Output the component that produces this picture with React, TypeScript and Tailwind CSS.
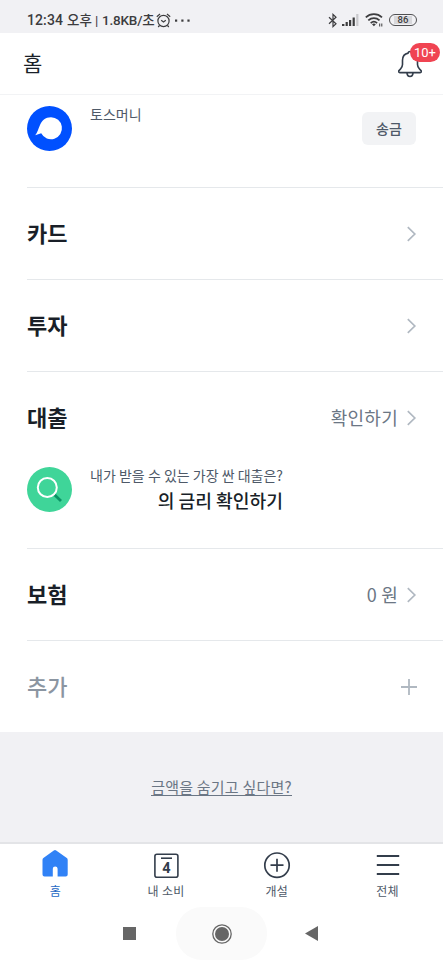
import React from 'react';

const Chevron: React.FC = () => (
  <svg className="w-[11px] h-4 ml-2" viewBox="0 0 11 16" fill="none" stroke="#b0b8c1" strokeWidth="1.7">
    <path d="M1.8 1.2 8.8 8l-7 6.8" />
  </svg>
);

interface RowProps {
  title: string;
  value?: string;
}

const SectionRow: React.FC<RowProps> = ({ title, value }) => (
  <div className="flex h-[91px] items-center justify-between pr-[26px]">
    <h2 className="pb-[4px] text-[22px] leading-8 font-bold text-[#191f28]">{title}</h2>
    <div className="flex items-center text-[18px] leading-7 text-[#6b7684]">
      <span className="pb-[2px] tracking-[0.25px]">{value}</span>
      <Chevron />
    </div>
  </div>
);

const StatusBar: React.FC = () => (
  <div className="flex h-[33px] items-center justify-between bg-[#f1f1f4] pt-[7px] pr-[26px] pl-[27px] text-[#3c3c3e]">
    <div className="flex items-center font-[Roboto,'Noto_Sans_CJK_KR',sans-serif] text-[13.5px] leading-5 font-medium whitespace-nowrap">
      <span className="w-[37px] text-[14px] tracking-[0.1px]">12:34</span>
      <span className="ml-[3px] w-[25px]">오후</span>
      <span className="ml-[3px] w-1 font-normal">|</span>
      <span className="ml-[3px] w-[51px] tracking-[-0.2px]">1.8KB/초</span>
      <svg className="ml-[3px] h-[15px] w-[15px]" viewBox="0 0 15 15" fill="none" stroke="currentColor" strokeWidth="1.2">
        <circle cx="7.5" cy="8" r="5.6" />
        <path d="M5.2 7.3 7.5 9l2.3-1.7M.8 3.7 4 1M14.2 3.7 11 1M3.5 12.5 2.2 14M11.5 12.5l1.3 1.5" />
      </svg>
      <svg className="ml-1 h-[3px] w-[15px]" viewBox="0 0 15 3" fill="currentColor">
        <rect x="0" y="0.5" width="2.2" height="2.2" />
        <rect x="6.3" y="0.5" width="2.2" height="2.2" />
        <rect x="12.4" y="0.5" width="2.2" height="2.2" />
      </svg>
    </div>
    <div className="flex items-center">
      <svg className="h-[15px] w-[10px]" viewBox="0 0 10 15" fill="none" stroke="currentColor" strokeWidth="1.2">
        <path d="M1 4.2 8 10.7 5 13.6V1.4L8 4.3 1 10.8" />
      </svg>
      <svg className="ml-1 h-3 w-[17px]" viewBox="0 0 17 12" fill="currentColor">
        <rect x="0" y="10" width="2.4" height="2" />
        <rect x="3.6" y="8" width="2.2" height="4" />
        <rect x="7" y="6" width="2.2" height="6" />
        <rect x="10.6" y="3.5" width="2.2" height="8.5" />
        <rect x="14.2" y="0" width="2.2" height="12" fill="#c9c9cc" />
      </svg>
      <svg className="ml-1.5 h-[14px] w-[18px]" viewBox="0 0 18 14" fill="none" stroke="currentColor" strokeWidth="1.7">
        <path d="M.8 4.3c4.6-4.2 11.6-4.2 16.2 0M3.3 7.3c3.3-3 8-3 11.2 0M5.7 10.1c1.9-1.8 4.5-1.8 6.4 0" />
        <path d="m7 11.2 1.9 2 1.9-2c-1-.9-2.8-.9-3.8 0Z" fill="currentColor" stroke="none" />
        <path d="M14.7 10.5v3M16.8 10.5v3" strokeWidth="1" />
      </svg>
      <div className="ml-1.5 flex h-[12px] w-[28px] items-center justify-center rounded-full border border-[#505052] p-px">
        <span className="flex h-2 w-[18px] items-center justify-center bg-[#d8d8db] font-[Roboto,sans-serif] text-[9.5px] leading-none font-medium">
          86
        </span>
      </div>
    </div>
  </div>
);

const Header: React.FC = () => (
  <header className="flex h-[62px] items-center justify-between border-b border-[#f2f3f5] pr-[21px] pl-[23px]">
    <h1 className="pb-[4px] text-[21px] leading-8 text-[#191f28]">홈</h1>
    <div className="relative">
      <svg className="h-7 w-6" viewBox="0 0 24 28" fill="none" stroke="#333d4b" strokeWidth="1.6" strokeLinecap="round" strokeLinejoin="round">
        <path d="M10.2 3.1c-3.6.7-5.7 3.5-5.7 7.2v4.3c0 1.6-.6 2.7-1.8 4.1L1 20.6c-.7.9-.3 2 .9 2h20.2c1.2 0 1.6-1.1.9-2l-1.7-1.9c-1.2-1.4-1.8-2.5-1.8-4.1v-4.3c0-3.7-2.1-6.5-5.7-7.2 0-2.1-3.6-2.1-3.6 0Z" />
        <path d="M9 23c.2 4.6 5.8 4.6 6 0" />
      </svg>
      <span className="absolute top-[-7px] left-[12px] flex h-[19px] w-[30px] items-center justify-center rounded-full bg-[#f04452] font-[Roboto,sans-serif] text-[13px] leading-none text-white">
        10+
      </span>
    </div>
  </header>
);

const TabBar: React.FC = () => (
  <nav className="grid h-[65px] grid-cols-4 border-t-2 border-[#e3e4e7] bg-white text-center text-[12px] leading-[18px] text-[#4e5968]">
    <a className="flex flex-col items-center gap-[3px] pt-[5px] text-[#2469c4]">
      <svg className="h-[30px] w-[28px]" viewBox="0 0 28 30" fill="#3182f6">
        <path d="M12.8 1.4Q14 .6 15.2 1.4l10.6 7.7q.9.7.9 1.8v14.5q0 2-2 2h-8.1v-7.7q0-2.3-2.4-2.3t-2.4 2.3v7.7H3.5q-2 0-2-2V10.9q0-1.1.9-1.8Z" />
      </svg>
      <span>홈</span>
    </a>
    <a className="flex flex-col items-center gap-[3px] pt-[5px]">
      <svg className="h-[30px] w-[28px]" viewBox="0 0 28 30" fill="none" stroke="#333d4b" strokeWidth="1.6">
        <rect x="2.9" y="5.2" width="23" height="23" rx="2" />
        <path d="M9 9.2h11" />
        <text x="14.4" y="24" textAnchor="middle" fill="#333d4b" stroke="none" fontFamily="Roboto, sans-serif" fontWeight="700" fontSize="14.5">4</text>
      </svg>
      <span className="tracking-[0.3px]">내 소비</span>
    </a>
    <a className="flex flex-col items-center gap-[3px] pt-[5px]">
      <svg className="h-[30px] w-[28px]" viewBox="0 0 28 30" fill="none" stroke="#333d4b" strokeWidth="1.7">
        <circle cx="14" cy="16.2" r="12.2" />
        <path d="M7.5 16.2h13M14 9.7v13" />
      </svg>
      <span className="tracking-[0.3px]">개설</span>
    </a>
    <a className="flex flex-col items-center gap-[3px] pt-[5px]">
      <svg className="h-[30px] w-[28px]" viewBox="0 0 28 30" fill="none" stroke="#333d4b" strokeWidth="2">
        <path d="M2.8 7h22.4M2.8 16h22.4M2.8 25h22.4" />
      </svg>
      <span className="tracking-[0.3px]">전체</span>
    </a>
  </nav>
);

const App: React.FC = () => {
  return (
    <div className="flex h-[960px] w-[443px] flex-col overflow-hidden bg-white font-['Noto_Sans_CJK_KR',sans-serif]">
      <StatusBar />
      <Header />

      <main className="pl-[27px]">
        <div className="divide-y divide-[#e5e8eb]">
          {/* Toss money account */}
          <div className="flex h-[93px] items-start pt-[11px] pr-[27px]">
            <svg className="h-[45px] w-[45px]" viewBox="0 0 45 45">
              <circle cx="22.5" cy="22.5" r="22.5" fill="#0050ff" />
              <path d="M24 11.2a11 11 0 1 1-9.8 16.1L8.2 29.3C10.2 26.8 11.5 22.6 12.7 19.7 14.6 14.6 18.5 11.2 24 11.2Z" fill="#fff" />
            </svg>
            <p className="-mt-px ml-[18px] text-[14px] leading-[18px] text-[#4e5968]">토스머니</p>
            <button className="mt-[6px] ml-auto h-[33px] w-[54px] rounded-md bg-[#f2f3f5] pb-[2px] text-[14px] leading-5 font-medium text-[#4e5968]">
              송금
            </button>
          </div>
          <div><SectionRow title="카드" /></div>
          <div><SectionRow title="투자" /></div>
          <div className="h-[177px]">
            <SectionRow title="대출" value="확인하기" />
            <div className="flex items-start pt-[4px]">
              <svg className="h-[45px] w-[45px]" viewBox="0 0 45 45" fill="none">
                <circle cx="22.5" cy="22.5" r="22.5" fill="#3fd599" />
                <path d="m27 27.2 7 6.8" stroke="#099365" strokeWidth="2.8" />
                <circle cx="20.3" cy="20.5" r="9.5" stroke="#fff" strokeWidth="2" />
              </svg>
              <div className="ml-[18px] w-[193px] whitespace-nowrap text-right">
                <p className="-mt-px text-[14px] leading-[18px] text-[#4e5968]">내가 받을 수 있는 가장 싼 대출은?</p>
                <p className="mt-[2px] text-[18.2px] leading-7 font-medium text-[#191f28]">의 금리 확인하기</p>
              </div>
            </div>
          </div>
          <div><SectionRow title="보험" value="0 원" /></div>
          <div className="flex h-[91px] items-center justify-between pr-[25px]">
            <h2 className="pb-[4px] text-[22px] leading-8 font-medium text-[#8b95a1]">추가</h2>
            <svg className="h-[18px] w-[18px]" viewBox="0 0 18 18" stroke="#b0b8c1" strokeWidth="1.8">
              <path d="M1 9h16M9 1v16" />
            </svg>
          </div>
        </div>
      </main>

      <div className="flex h-[110px] items-center justify-center bg-[#f1f1f4]">
        <a className="border-b border-[#6b7684] text-[15px] leading-[17px] tracking-[0.2px] text-[#6b7684]">금액을 숨기고 싶다면?</a>
      </div>

      <TabBar />

      {/* Android navigation buttons */}
      <div className="flex h-[53px] items-center justify-center bg-white pr-[2px]">
        <div className="mr-[40px] h-[13px] w-[13px] bg-[#666]" />
        <div className="flex h-[53px] w-[91px] items-center justify-center rounded-[26px] bg-[#fafafa]">
          <svg className="h-5 w-5" viewBox="0 0 20 20">
            <circle cx="10" cy="10" r="9.2" fill="none" stroke="#666" strokeWidth="1.3" />
            <circle cx="10" cy="10" r="7" fill="#666" />
          </svg>
        </div>
        <svg className="ml-[38px] h-[15px] w-[13px]" viewBox="0 0 13 15" fill="#666">
          <path d="M0 7.5 13 0v15Z" />
        </svg>
      </div>
    </div>
  );
};

export default App;
